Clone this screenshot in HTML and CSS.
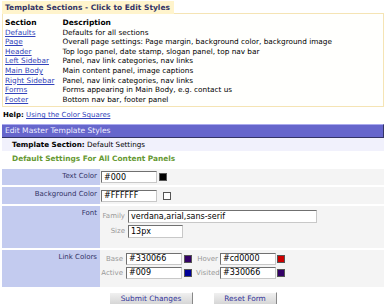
FILE: index.html
```html
<!DOCTYPE html>
<html lang="en">
<head>
  <meta charset="UTF-8">
  <title>Edit Master Template Styles</title>
  <link rel="stylesheet" href="styles.css">
</head>
<body>
<div class="page">
  <!-- template section list -->
  <div class="sections">
    <div class="sections-tab">Template Sections - Click to Edit Styles</div>
    <div class="sections-box">
      <table class="section-table">
        <tr><th>Section</th><th>Description</th></tr>
        <tr><td><a href="#">Defaults</a></td><td>Defaults for all sections</td></tr>
        <tr><td><a href="#">Page</a></td><td>Overall page settings: Page margin, background color, background image</td></tr>
        <tr><td><a href="#">Header</a></td><td>Top logo panel, date stamp, slogan panel, top nav bar</td></tr>
        <tr><td><a href="#">Left Sidebar</a></td><td>Panel, nav link categories, nav links</td></tr>
        <tr><td><a href="#">Main Body</a></td><td>Main content panel, image captions</td></tr>
        <tr><td><a href="#">Right Sidebar</a></td><td>Panel, nav link categories, nav links</td></tr>
        <tr><td><a href="#">Forms</a></td><td>Forms appearing in Main Body, e.g. contact us</td></tr>
        <tr><td><a href="#">Footer</a></td><td>Bottom nav bar, footer panel</td></tr>
      </table>
    </div>
  </div>

  <div class="help"><b>Help:</b> <a href="#">Using the Color Squares</a></div>

  <!-- edit panel -->
  <div class="panel-title">Edit Master Template Styles</div>
  <div class="panel-sub"><b>Template Section:</b> Default Settings</div>
  <div class="panel-heading">Default Settings For All Content Panels</div>

  <form class="style-form">
    <table class="form-table">
      <tr>
        <td class="label">Text Color</td>
        <td class="field">
          <input type="text" class="color-input" value="#000"><span class="swatch" style="background:#000000"></span>
        </td>
      </tr>
      <tr>
        <td class="label">Background Color</td>
        <td class="field">
          <input type="text" class="color-input" value="#FFFFFF"><span class="swatch swatch-empty" style="background:#ffffff"></span>
        </td>
      </tr>
      <tr>
        <td class="label">Font</td>
        <td class="field field-font">
          <div class="sub-grid">
            <span class="sub-label">Family</span>
            <input type="text" class="family-input" value="verdana,arial,sans-serif">
            <span class="sub-label">Size</span>
            <input type="text" class="size-input" value="13px">
          </div>
        </td>
      </tr>
      <tr>
        <td class="label">Link Colors</td>
        <td class="field field-links">
          <div class="link-grid">
            <span class="sub-label">Base</span>
            <input type="text" class="color-input" value="#330066">
            <span class="swatch" style="background:#330066"></span>
            <span class="sub-label">Hover</span>
            <input type="text" class="color-input" value="#cd0000">
            <span class="swatch" style="background:#cd0000"></span>
            <span class="sub-label">Active</span>
            <input type="text" class="color-input" value="#009">
            <span class="swatch" style="background:#000099"></span>
            <span class="sub-label">Visited</span>
            <input type="text" class="color-input" value="#330066">
            <span class="swatch" style="background:#330066"></span>
          </div>
        </td>
      </tr>
    </table>
    <div class="buttons">
      <button type="button" class="form-button submit-button">Submit Changes</button>
      <button type="reset" class="form-button reset-button">Reset Form</button>
    </div>
  </form>
</div>
</body>
</html>
```

FILE: styles.css
```css
body {
  margin: 0;
  padding: 0;
  background: #ffffff;
  font-family: "DejaVu Sans", Verdana, sans-serif;
  font-size: 7px;
  color: #000;
}
.page {
  padding: 1px 4px 0 2px;
}
a {
  color: #3344bb;
}

/* template sections box */
.sections-tab {
  display: inline-block;
  background-color: #fff4cc;
  color: #333366;
  font-weight: bold;
  font-size: 7.5px;
  padding: 2px 4px 1px 3px;
  line-height: 10px;
}
.sections-box {
  border: 1px solid #f5e4b4;
  background-color: #fffffd;
  padding: 4px 0 2px 2px;
  margin-top: -1px;
}
.section-table {
  border-collapse: collapse;
  font-size: 7.3px;
}
.section-table th,
.section-table td {
  padding: 0 8px 0 0;
  line-height: 9.6px;
  text-align: left;
  white-space: nowrap;
}
.section-table th {
  font-size: 7.5px;
}

.help {
  margin: 3px 0 0 1px;
  line-height: 10px;
}

/* edit panel */
.panel-title {
  margin-top: 4px;
  background-color: #6666cc;
  color: #eeeeff;
  font-size: 7.6px;
  line-height: 12px;
  padding: 0 3px;
  border-right: 1px solid #333366;
  border-bottom: 1px solid #333366;
  border-top: 1px solid #aaaaee;
}
.panel-sub {
  background-color: #f1f1fc;
  padding: 0 10px;
  line-height: 13px;
  font-size: 7.2px;
}
.panel-heading {
  color: #669933;
  font-weight: bold;
  font-size: 7.4px;
  padding: 2px 10px 0;
  line-height: 12px;
  height: 16px;
}

/* form table */
.form-table {
  width: 100%;
  border-collapse: separate;
  border-spacing: 0 2px;
  margin-top: -2px;
}
.form-table td {
  vertical-align: top;
  padding: 0;
}
.label {
  width: 95px;
  background-color: #c3cbef;
  color: #333366;
  text-align: right;
  padding: 3px 3px 0 0 !important;
  line-height: 9px;
}
.field {
  background-color: #f4f4f4;
  padding: 2px 0 2px 1px !important;
  line-height: 12px;
}
.field-font {
  padding: 4px 0 10px 0 !important;
}
.field-links {
  padding: 3px 0 8px 0 !important;
}
input[type="text"] {
  font-family: "DejaVu Sans", Verdana, sans-serif;
  font-size: 8px;
  height: 12px;
  padding: 0 2px;
  margin: 0;
  border: 1px solid #c8c8c8;
  border-top-color: #707070;
  border-left-color: #707070;
  background: #ffffff;
  box-sizing: border-box;
  vertical-align: middle;
}
.color-input {
  width: 56px;
}
.family-input {
  width: 189px;
  height: 13px !important;
}
.size-input {
  width: 55px;
  height: 13px !important;
}
.swatch {
  display: inline-block;
  width: 6px;
  height: 6px;
  margin-left: 2px;
  vertical-align: middle;
  border: 1px solid #555;
}
.swatch-empty {
  margin-left: 6px;
}
.sub-grid {
  display: grid;
  grid-template-columns: 28px auto;
  row-gap: 2px;
  align-items: center;
  justify-content: start;
}
.sub-grid .sub-label {
  padding-right: 3px;
}
.link-grid {
  display: grid;
  grid-template-columns: 26px 57px 13px 24px 56px 8px;
  row-gap: 2px;
  align-items: center;
  justify-content: start;
}
.link-grid input[type="text"] {
  height: 12px;
}
.link-grid .sub-label {
  padding-right: 3px;
}
.link-grid .sub-label:nth-child(4n+4),
.link-grid .sub-label:nth-of-type(even) {
  padding-right: 2px;
}
.sub-label {
  color: #999999;
  text-align: right;
  font-size: 7px;
}
.link-grid .swatch {
  margin-left: 1px;
}

.buttons {
  display: flex;
  justify-content: center;
  gap: 20px;
  margin-top: 3px;
}
.form-button {
  font-family: "DejaVu Sans", Verdana, sans-serif;
  font-size: 7.4px;
  color: #333399;
  height: 13px;
  padding: 0;
  background: linear-gradient(#f0f0f0, #d6d6d6);
  border: 1px solid #ffffff;
  border-right-color: #888888;
  border-bottom-color: #888888;
  line-height: 11px;
}
.submit-button {
  width: 84px;
}
.reset-button {
  width: 64px;
}
```
